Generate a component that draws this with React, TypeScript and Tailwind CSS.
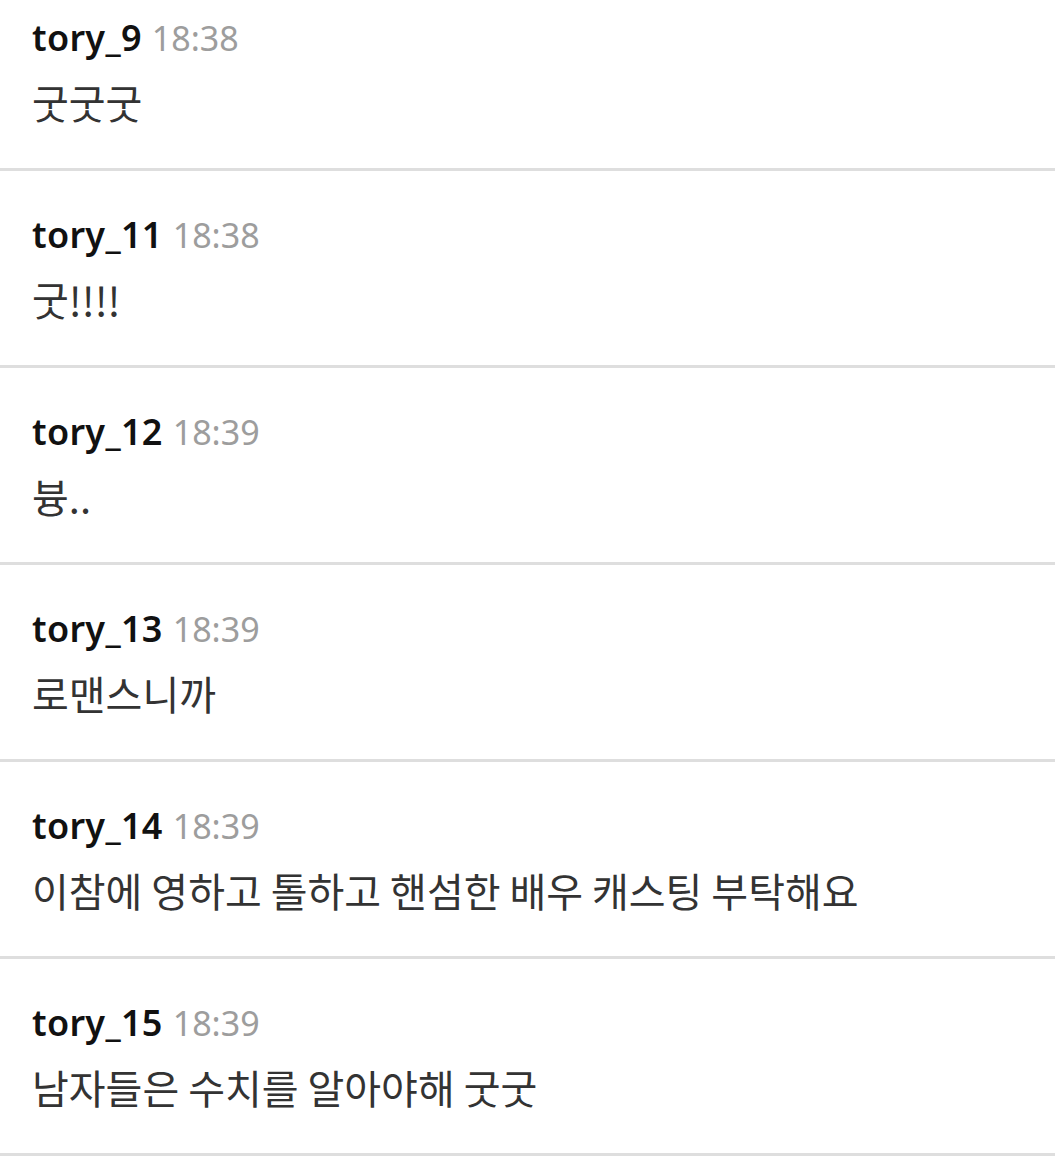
const comments = [
  { user: "tory_9", time: "18:38", text: "굿굿굿" },
  { user: "tory_11", time: "18:38", text: "굿!!!!" },
  { user: "tory_12", time: "18:39", text: "븅.." },
  { user: "tory_13", time: "18:39", text: "로맨스니까" },
  { user: "tory_14", time: "18:39", text: "이참에 영하고 톨하고 핸섬한 배우 캐스팅 부탁해요" },
  { user: "tory_15", time: "18:39", text: "남자들은 수치를 알아야해 굿굿" },
];

export default function App() {
  return (
    <div className="w-[1055px] h-[1174px] overflow-hidden bg-white">
      <div className="mt-[-26px] flex flex-col">
        {comments.map((c) => (
          <div
            key={c.user}
            className="h-[197px] border-b-[3px] border-[#dedede] px-8 pt-[44px]"
          >
            <div className="flex items-baseline gap-[10px] text-[34px] leading-[40px] font-['Noto_Sans','Noto_Sans_CJK_KR',sans-serif]">
              <span className="text-[36px] font-semibold text-[#111] tracking-[0.3px]">{c.user}</span>
              <span className="text-[#9d9d9d]">{c.time}</span>
            </div>
            <div className="mt-[22px] text-[40px] leading-[44px] text-[#333] font-['Noto_Sans_CJK_KR','Noto_Sans',sans-serif]">
              {c.text}
            </div>
          </div>
        ))}
      </div>
    </div>
  );
}
